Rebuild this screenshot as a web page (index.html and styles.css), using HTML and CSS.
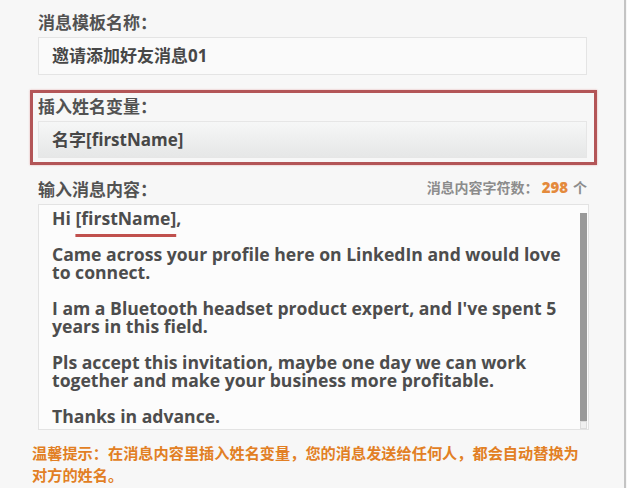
FILE: index.html
```html
<!DOCTYPE html>
<html lang="zh">
<head>
<meta charset="utf-8">
<title>消息模板</title>
<link rel="stylesheet" href="styles.css">
</head>
<body>
<div class="page">
  <div class="form">
    <div class="field">
      <div class="label">消息模板名称：</div>
      <div class="input">邀请添加好友消息01</div>
    </div>
    <div class="field highlight">
      <div class="label">插入姓名变量：</div>
      <div class="input input-grad">名字[firstName]</div>
    </div>
    <div class="field">
      <div class="label-row">
        <span class="label">输入消息内容：</span>
        <span class="count">消息内容字符数：<b class="num">298</b>个</span>
      </div>
      <div class="textarea">
        <div class="ta-text">
          <p>Hi <span class="var">[firstName]</span>,</p>
          <p>Came across your profile here on LinkedIn and would love<br>to connect.</p>
          <p>I am a Bluetooth headset product expert, and I've spent 5<br>years in this field.</p>
          <p>Pls accept this invitation, maybe one day we can work<br>together and make your business more profitable.</p>
          <p>Thanks in advance.</p>
        </div>
        <div class="scroll">
          <div class="thumb"></div>
          <div class="grip"></div>
        </div>
      </div>
    </div>
    <p class="hint">温馨提示：在消息内容里插入姓名变量，您的消息发送给任何人，都会自动替换为对方的姓名。</p>
  </div>
</div>
</body>
</html>
```

FILE: styles.css
```css
html, body {
  margin: 0;
  padding: 0;
  background: #f7f7f7;
}
body {
  font-family: "Open Sans", "Noto Sans CJK SC", sans-serif;
  color: #4a4a4a;
}
.page {
  width: 624px;
  height: 488px;
  border-right: 2px solid #c4c4c4;
  background: #f7f7f7;
  overflow: hidden;
}
.form {
  width: 549px;
  padding: 11px 0 0 38px;
}
.label {
  font-size: 17px;
  font-weight: 700;
  line-height: 24px;
  color: #525252;
}
.field > .label {
  margin-bottom: 2px;
}
.input {
  box-sizing: border-box;
  height: 38px;
  line-height: 36px;
  padding-left: 13px;
  border: 1px solid #e4e4e4;
  background: #fafafa;
  font-size: 17px;
  font-weight: 700;
  color: #474747;
}
.highlight {
  margin: 15px -10px 0 -8px;
  padding: 2px 7px 4px 5px;
  border: 3px solid #b35557;
  box-shadow: 0 0 2px rgba(210, 90, 90, 0.45);
}
.highlight > .label {
  margin-bottom: 2px;
}
.input-grad {
  height: 37px;
  line-height: 35px;
  background: linear-gradient(#f6f7f7, #eceded 60%, #e6e7e7);
  border-color: #e6e6e6;
}
.label-row {
  margin-top: 13px;
  margin-bottom: 2px;
  height: 24px;
  display: flex;
  justify-content: space-between;
  align-items: center;
}
.count {
  font-size: 14px;
  font-weight: 700;
  color: #8c8c8c;
  margin-top: -6px;
}
.count .num {
  color: #e48a3c;
  font-size: 15px;
  margin: 0 5px 0 3px;
}
.textarea {
  box-sizing: border-box;
  height: 226px;
  margin-right: -2px;
  border: 1px solid #e3e3e3;
  background: #fcfcfc;
  display: flex;
}
.ta-text {
  flex: 1;
  padding: 4px 0 0 13px;
  font-size: 17.6px;
  line-height: 18px;
  font-weight: 700;
  color: #4d4d4d;
}
.ta-text p {
  margin: 0 0 18px;
}
.var {
  text-decoration: underline;
  text-decoration-color: #c0504d;
  text-decoration-thickness: 3px;
  text-underline-offset: 9px;
}
.scroll {
  width: 7px;
  margin-right: 1px;
  padding-top: 8px;
  display: flex;
  flex-direction: column;
}
.thumb {
  flex: 1;
  background: #9a9a9a;
}
.grip {
  height: 8px;
  background: #f0f0f0;
  border: 1px solid #dcdcdc;
  box-sizing: border-box;
}
.hint {
  margin: 12px 0 0 -6px;
  width: 560px;
  font-size: 15.2px;
  line-height: 22px;
  font-weight: 700;
  color: #e27f24;
}
```
